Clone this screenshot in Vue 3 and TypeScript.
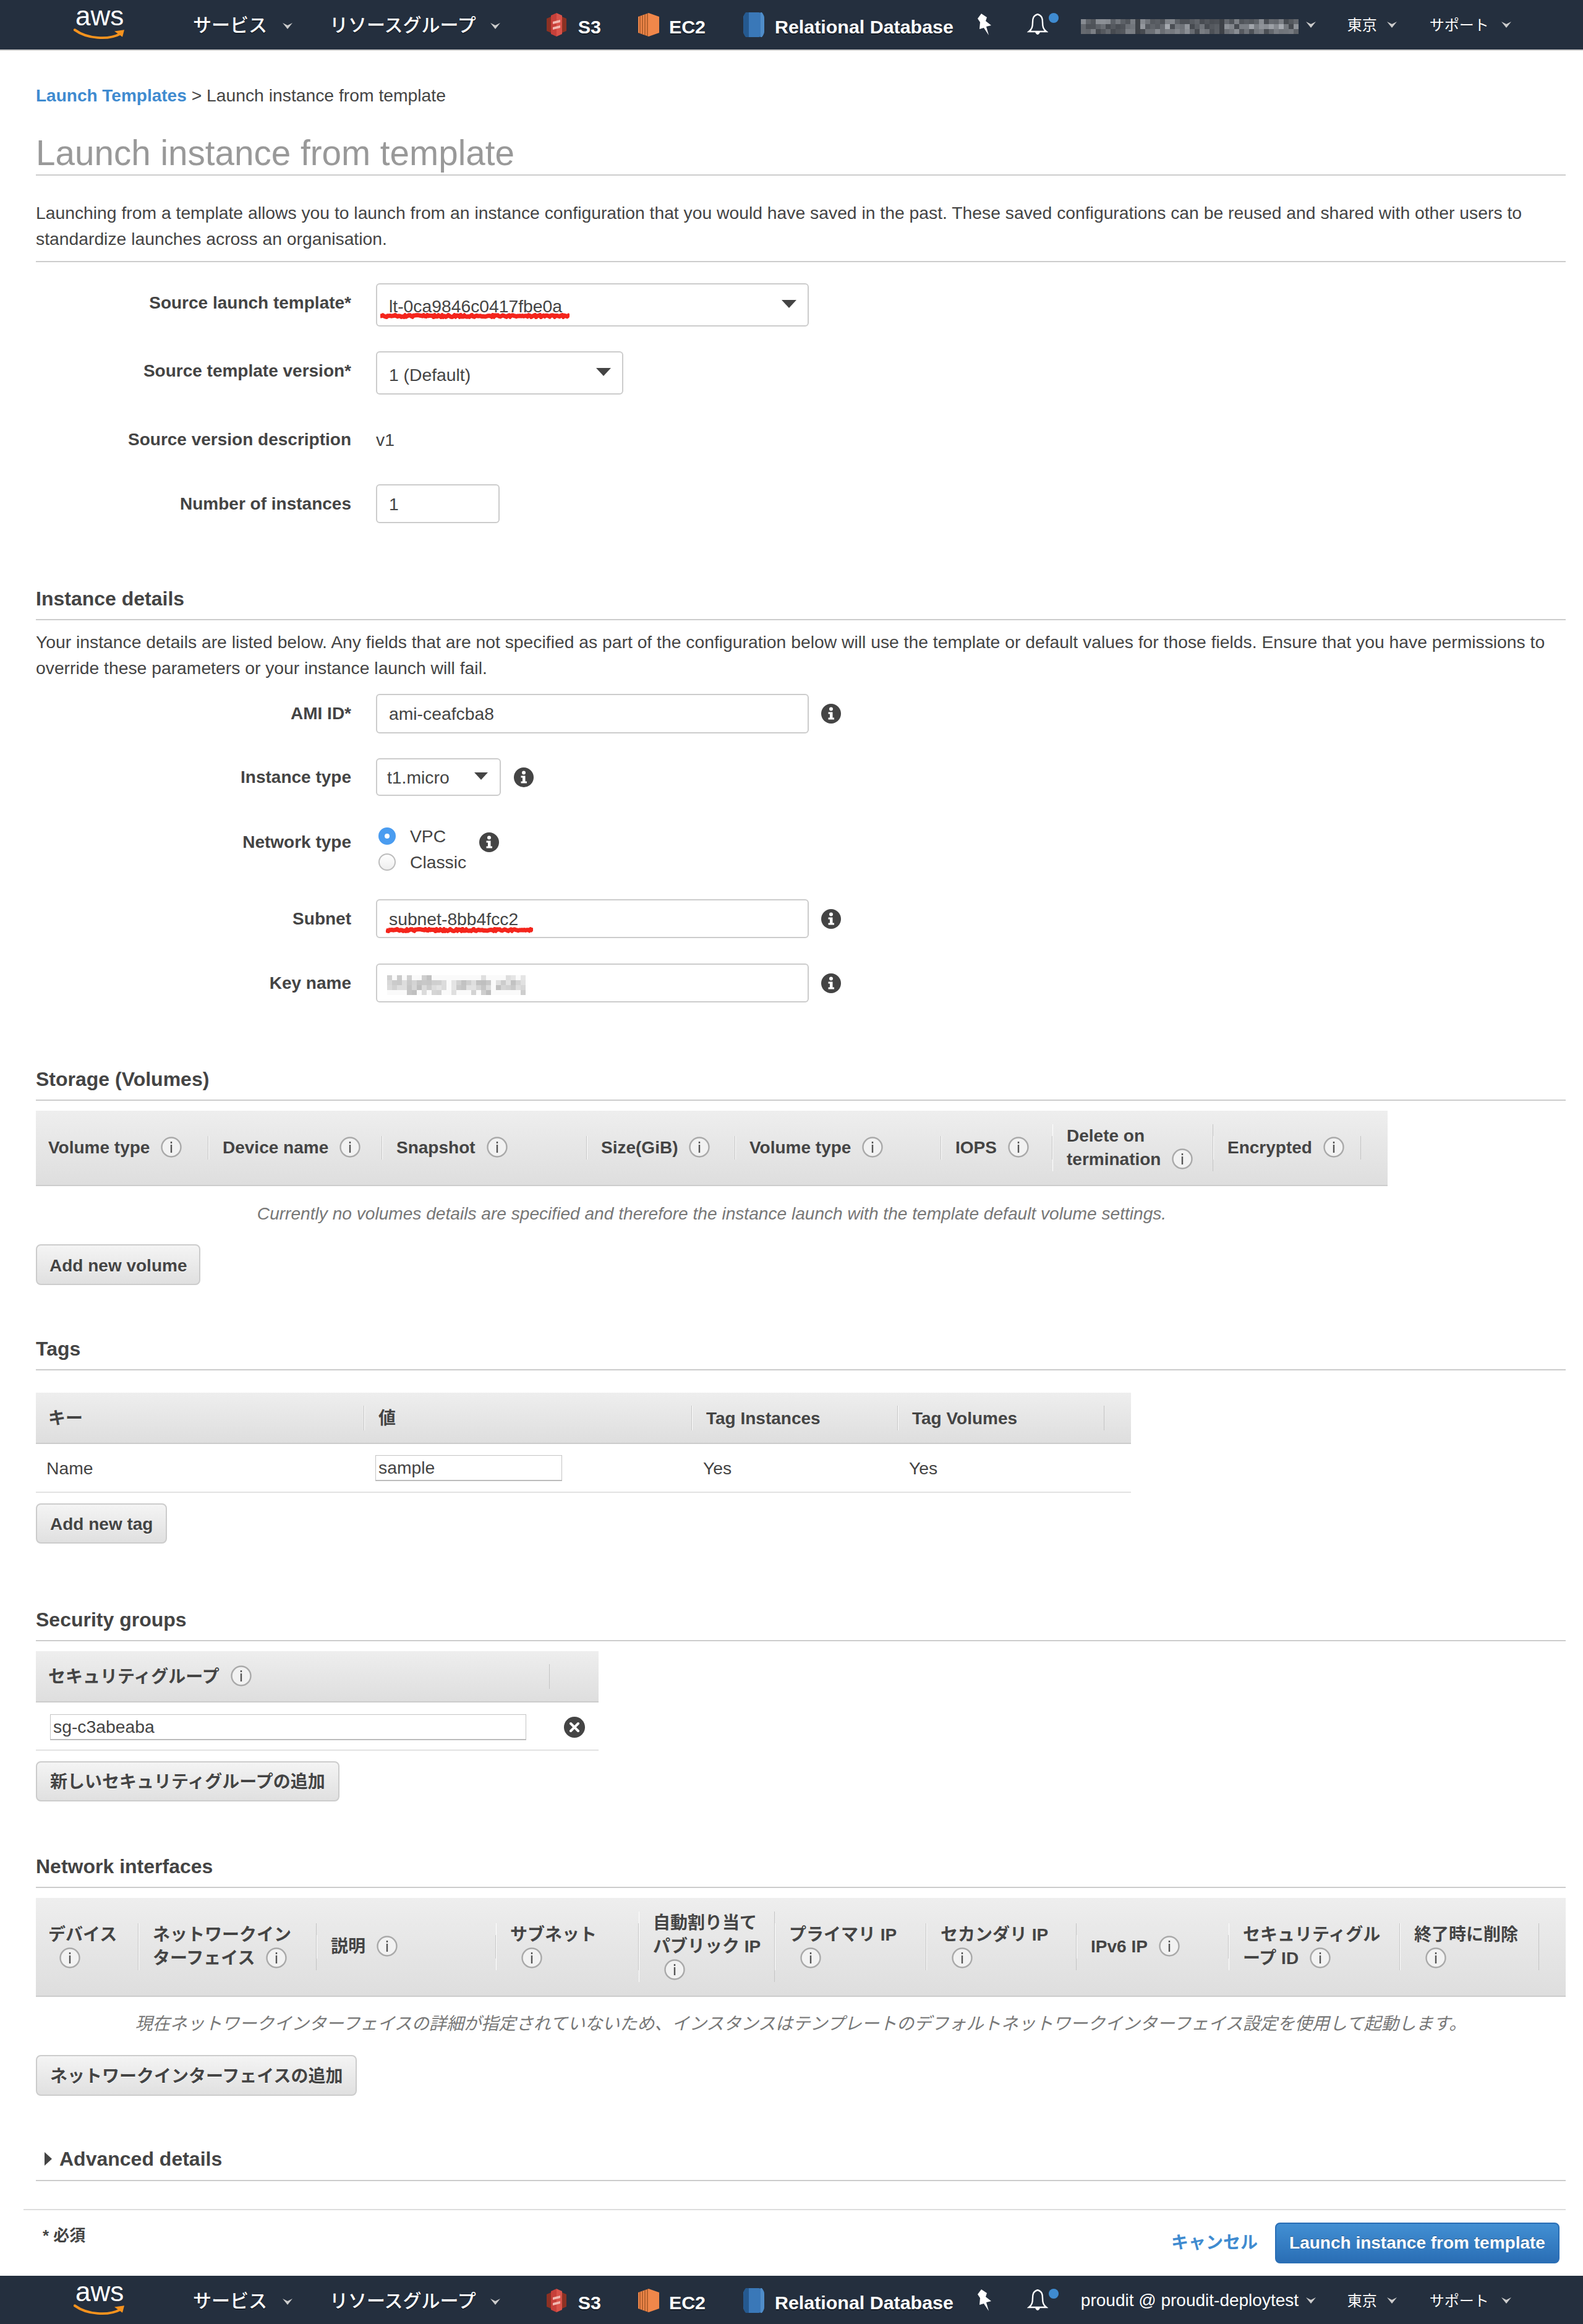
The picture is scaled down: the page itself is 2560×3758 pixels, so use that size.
<script setup lang="ts">
interface Col { w: number; lines: string[]; icon?: boolean }

const storageCols: Col[] = [
  { w: 279, lines: ['Volume type'], icon: true },
  { w: 281, lines: ['Device name'], icon: true },
  { w: 331, lines: ['Snapshot'], icon: true },
  { w: 240, lines: ['Size(GiB)'], icon: true },
  { w: 333, lines: ['Volume type'], icon: true },
  { w: 180, lines: ['IOPS'], icon: true },
  { w: 260, lines: ['Delete on', 'termination'], icon: true },
  { w: 239, lines: ['Encrypted'], icon: true },
]
const tagCols: Col[] = [
  { w: 531, lines: ['キー'] },
  { w: 530, lines: ['値'] },
  { w: 333, lines: ['Tag Instances'] },
  { w: 334, lines: ['Tag Volumes'] },
]
const sgCols: Col[] = [{ w: 831, lines: ['セキュリティグループ'], icon: true }]
const netCols: Col[] = [
  { w: 166, lines: ['デバイス', ''], icon: true },
  { w: 288, lines: ['ネットワークイン', 'ターフェイス'], icon: true },
  { w: 290, lines: ['説明'], icon: true },
  { w: 231, lines: ['サブネット', ''], icon: true },
  { w: 220, lines: ['自動割り当て', 'パブリック IP', ''], icon: true },
  { w: 245, lines: ['プライマリ IP', ''], icon: true },
  { w: 243, lines: ['セカンダリ IP', ''], icon: true },
  { w: 246, lines: ['IPv6 IP'], icon: true },
  { w: 277, lines: ['セキュリティグル', 'ープ ID'], icon: true },
  { w: 225, lines: ['終了時に削除', ''], icon: true },
]

function noise(seed: number): number {
  const v = Math.sin(seed * 12.9898) * 43758.5453
  return v - Math.floor(v)
}

const accountCells: { x: number; y: number; c: string }[] = []
for (let x = 0; x < 44; x++) {
  for (let y = 0; y < 3; y++) {
    const gap = x === 11 || x === 28
    const g = gap ? 62 : Math.round(70 + noise(x * 3 + y * 57 + 1) * (y === 1 ? 100 : 70))
    accountCells.push({ x: x * 8, y: y * 8, c: `rgb(${g},${g + 4},${g + 10})` })
  }
}

const keyCells: { x: number; y: number; c: string }[] = []
for (let x = 0; x < 28; x++) {
  for (let y = 0; y < 4; y++) {
    const edge = y === 0 || y === 3
    const blank = (x === 12 || x === 21) || (edge && noise(x + y * 31) > 0.4)
    const g = blank ? 250 : Math.round(190 + noise(x * 7 + y * 13 + 5) * 40)
    keyCells.push({ x: x * 8, y: y * 8, c: `rgb(${g},${g},${g})` })
  }
}

function squiggle(width: number, seed: number): string {
  let d = 'M0 5'
  for (let x = 2; x <= width; x += 2) {
    d += ` L${x} ${(3.5 + noise(x + seed) * 3).toFixed(1)}`
  }
  return d
}
const squiggleA = squiggle(306, 3)
const squiggleB = squiggle(238, 9)
</script>

<template>
  <div class="page">
    <header class="nav nav-top">
      <div class="logo">
        <span class="logo-word">aws</span>
        <svg class="logo-smile" width="84" height="20" viewBox="0 0 84 26" preserveAspectRatio="none">
          <path d="M2 3 C22 22 56 25 76 11" fill="none" stroke="#f7931e" stroke-width="5" stroke-linecap="round" />
          <path d="M66 6 L82 3 L79 18 Z" fill="#f7931e" />
        </svg>
      </div>
      <span class="nav-jp m-services">サービス</span>
      <svg class="chev c-a" width="16" height="10" viewBox="0 0 16 10"><path d="M0 0 L8 4 L16 0 L8 10 Z" fill="#ccc" /></svg>
      <span class="nav-jp m-groups">リソースグループ</span>
      <svg class="chev c-b" width="16" height="10" viewBox="0 0 16 10"><path d="M0 0 L8 4 L16 0 L8 10 Z" fill="#ccc" /></svg>
      <svg class="svc m-s3" width="32" height="38" viewBox="0 0 32 38">
        <path d="M0 9 L7 6 L7 32 L0 29 Z" fill="#8c3123" />
        <path d="M7 4 L16 0 L16 38 L7 34 Z" fill="#c7403a" />
        <path d="M16 0 L25 4 L25 34 L16 38 Z" fill="#d9534a" />
        <path d="M25 6 L32 9 L32 29 L25 32 Z" fill="#8c3123" />
        <path d="M10 14 L22 11 L22 15 L10 18 Z M10 23 L22 20 L22 24 L10 27 Z" fill="#f2b8b0" />
      </svg>
      <span class="svc-name g-s3">S3</span>
      <svg class="svc m-ec2" width="34" height="38" viewBox="0 0 34 38">
        <path d="M0 6 L17 0 L34 6 L34 32 L17 38 L0 32 Z" fill="#f0874a" />
        <path d="M3 5 V33 M7 4 V34 M11 2 V36 M15 1 V37" stroke="#a85a28" stroke-width="1.6" />
      </svg>
      <span class="svc-name g-ec2">EC2</span>
      <svg class="svc m-rds" width="34" height="40" viewBox="0 0 34 40">
        <rect width="34" height="40" rx="9" fill="#3a78b8" />
        <path d="M9 0 H4 Q0 4 0 12 V28 Q0 36 4 40 H9 Z" fill="#25598f" />
        <path d="M28 0 H30 Q34 4 34 12 V28 Q34 36 30 40 H28 Z" fill="#4f8cc8" />
      </svg>
      <span class="svc-name g-rds">Relational Database</span>
      <svg class="m-pin" width="26" height="36" viewBox="0 0 26 36">
        <path d="M8 0 L17 6 L15 12 L24 19 L16 21 L20 35 L12 23 L5 25 L6 14 L2 8 Z" fill="#fff" />
      </svg>
      <span class="bell-wrap m-bell">
        <svg width="34" height="36" viewBox="0 0 34 36">
          <path d="M17 1 C10 3 9 8 9 14 C9 21 8 25 3 29 H31 C26 25 25 21 25 14 C25 8 24 3 17 1 Z" fill="none" stroke="#fff" stroke-width="2.4" />
          <path d="M13 30 Q17 38 21 30" fill="#fff" />
        </svg>
        <i class="bell-dot"></i>
      </span>
      <svg class="account m-account" width="352" height="24" viewBox="0 0 352 24">
        <rect v-for="(c, i) in accountCells" :key="i" :x="c.x" :y="c.y" width="8" height="8" :fill="c.c" />
      </svg>
      <svg class="chev c-c" width="16" height="10" viewBox="0 0 16 10"><path d="M0 0 L8 4 L16 0 L8 10 Z" fill="#ccc" /></svg>
      <span class="nav-sm m-region">東京</span>
      <svg class="chev c-d" width="16" height="10" viewBox="0 0 16 10"><path d="M0 0 L8 4 L16 0 L8 10 Z" fill="#ccc" /></svg>
      <span class="nav-sm m-support">サポート</span>
      <svg class="chev c-e" width="16" height="10" viewBox="0 0 16 10"><path d="M0 0 L8 4 L16 0 L8 10 Z" fill="#ccc" /></svg>
    </header>

    <main class="main">
      <div class="crumb"><a class="link">Launch Templates</a> &gt; Launch instance from template</div>
      <h1 class="title">Launch instance from template</h1>
      <p class="para para-top">Launching from a template allows you to launch from an instance configuration that you would have saved in the past. These saved configurations can be reused and shared with other users to<br />standardize launches across an organisation.</p>

      <div class="row r1">
        <label class="lab">Source launch template*</label>
        <div class="ctl box sel w-lg">
          <span class="val">lt-0ca9846c0417fbe0a</span>
          <svg class="arrow" width="24" height="13" viewBox="0 0 24 13"><path d="M0 0 H24 L12 13 Z" fill="#444" /></svg>
          <svg class="squig sq-a" width="306" height="10" viewBox="0 0 306 10"><path :d="squiggleA" fill="none" stroke="#f4251c" stroke-width="7" /></svg>
        </div>
      </div>
      <div class="row r2">
        <label class="lab">Source template version*</label>
        <div class="ctl box sel w-md">
          <span class="val">1 (Default)</span>
          <svg class="arrow" width="24" height="13" viewBox="0 0 24 13"><path d="M0 0 H24 L12 13 Z" fill="#444" /></svg>
        </div>
      </div>
      <div class="row r3">
        <label class="lab">Source version description</label>
        <div class="ctl plain">v1</div>
      </div>
      <div class="row r4">
        <label class="lab">Number of instances</label>
        <div class="ctl box w-sm"><span class="val">1</span></div>
      </div>

      <h3 class="head h-inst">Instance details</h3>
      <p class="para para-inst">Your instance details are listed below. Any fields that are not specified as part of the configuration below will use the template or default values for those fields. Ensure that you have permissions to<br />override these parameters or your instance launch will fail.</p>

      <div class="row r5">
        <label class="lab">AMI ID*</label>
        <div class="ctl">
          <div class="box w-lg"><span class="val">ami-ceafcba8</span></div>
          <svg class="solid-info" width="32" height="32" viewBox="0 0 32 32"><circle cx="16" cy="16" r="16" fill="#444" /><circle cx="16" cy="8.5" r="3" fill="#fff" /><path d="M11.5 13.5 H18.5 V22.5 H21 V25.5 H11.5 V22.5 H14 V16.5 H11.5 Z" fill="#fff" /></svg>
        </div>
      </div>
      <div class="row r6">
        <label class="lab">Instance type</label>
        <div class="ctl">
          <div class="box sel w-type"><span class="val val-type">t1.micro</span>
            <svg class="arrow arrow-type" width="22" height="12" viewBox="0 0 24 13"><path d="M0 0 H24 L12 13 Z" fill="#444" /></svg>
          </div>
          <svg class="solid-info" width="32" height="32" viewBox="0 0 32 32"><circle cx="16" cy="16" r="16" fill="#444" /><circle cx="16" cy="8.5" r="3" fill="#fff" /><path d="M11.5 13.5 H18.5 V22.5 H21 V25.5 H11.5 V22.5 H14 V16.5 H11.5 Z" fill="#fff" /></svg>
        </div>
      </div>
      <div class="row r7">
        <label class="lab">Network type</label>
        <div class="ctl">
          <div class="radios">
            <div class="radio-line"><i class="radio on"></i>VPC</div>
            <div class="radio-line"><i class="radio"></i>Classic</div>
          </div>
          <svg class="solid-info info-net" width="32" height="32" viewBox="0 0 32 32"><circle cx="16" cy="16" r="16" fill="#444" /><circle cx="16" cy="8.5" r="3" fill="#fff" /><path d="M11.5 13.5 H18.5 V22.5 H21 V25.5 H11.5 V22.5 H14 V16.5 H11.5 Z" fill="#fff" /></svg>
        </div>
      </div>
      <div class="row r8">
        <label class="lab">Subnet</label>
        <div class="ctl">
          <div class="box w-lg"><span class="val">subnet-8bb4fcc2</span>
            <svg class="squig sq-b" width="238" height="10" viewBox="0 0 238 10"><path :d="squiggleB" fill="none" stroke="#f4251c" stroke-width="7" /></svg>
          </div>
          <svg class="solid-info" width="32" height="32" viewBox="0 0 32 32"><circle cx="16" cy="16" r="16" fill="#444" /><circle cx="16" cy="8.5" r="3" fill="#fff" /><path d="M11.5 13.5 H18.5 V22.5 H21 V25.5 H11.5 V22.5 H14 V16.5 H11.5 Z" fill="#fff" /></svg>
        </div>
      </div>
      <div class="row r9">
        <label class="lab">Key name</label>
        <div class="ctl">
          <div class="box w-lg">
            <svg class="key-blur" width="224" height="32" viewBox="0 0 224 32"><rect v-for="(c, i) in keyCells" :key="i" :x="c.x" :y="c.y" width="8" height="8" :fill="c.c" /></svg>
          </div>
          <svg class="solid-info" width="32" height="32" viewBox="0 0 32 32"><circle cx="16" cy="16" r="16" fill="#444" /><circle cx="16" cy="8.5" r="3" fill="#fff" /><path d="M11.5 13.5 H18.5 V22.5 H21 V25.5 H11.5 V22.5 H14 V16.5 H11.5 Z" fill="#fff" /></svg>
        </div>
      </div>

      <h3 class="head h-storage">Storage (Volumes)</h3>
      <div class="thead t-storage">
        <div v-for="(c, i) in storageCols" :key="i" class="th" :style="{ width: c.w + 'px' }">
          <div class="th-in">
            <template v-for="(l, j) in c.lines" :key="j">
              <span>{{ l }}</span><br v-if="j < c.lines.length - 1" />
            </template>
            <svg v-if="c.icon" class="q" width="34" height="34" viewBox="0 0 34 34"><circle cx="17" cy="17" r="15.5" fill="#f2f2f2" stroke="#a9a9a9" stroke-width="2.4" /><rect x="15.8" y="8" width="2.4" height="3" fill="#555" /><rect x="15.8" y="13" width="2.4" height="13" fill="#555" /></svg>
          </div>
        </div>
      </div>
      <div class="empty e-storage">Currently no volumes details are specified and therefore the instance launch with the template default volume settings.</div>
      <button class="btn b-vol">Add new volume</button>

      <h3 class="head h-tags">Tags</h3>
      <div class="thead t-tags">
        <div v-for="(c, i) in tagCols" :key="i" class="th" :style="{ width: c.w + 'px' }">
          <div class="th-in">{{ c.lines[0] }}</div>
        </div>
      </div>
      <div class="trow tr-tags">
        <div class="td" :style="{ width: tagCols[0].w + 'px' }">Name</div>
        <div class="td" :style="{ width: tagCols[1].w + 'px' }"><div class="cell-input ci-tag">sample</div></div>
        <div class="td" :style="{ width: tagCols[2].w + 'px' }">Yes</div>
        <div class="td" :style="{ width: tagCols[3].w + 'px' }">Yes</div>
      </div>
      <button class="btn b-tag">Add new tag</button>

      <h3 class="head h-sg">Security groups</h3>
      <div class="thead t-sg">
        <div v-for="(c, i) in sgCols" :key="i" class="th" :style="{ width: c.w + 'px' }">
          <div class="th-in">{{ c.lines[0] }}<svg class="q" width="34" height="34" viewBox="0 0 34 34"><circle cx="17" cy="17" r="15.5" fill="#f2f2f2" stroke="#a9a9a9" stroke-width="2.4" /><rect x="15.8" y="8" width="2.4" height="3" fill="#555" /><rect x="15.8" y="13" width="2.4" height="13" fill="#555" /></svg></div>
        </div>
      </div>
      <div class="trow tr-sg">
        <div class="cell-input ci-sg">sg-c3abeaba</div>
        <svg class="close" width="34" height="34" viewBox="0 0 34 34"><circle cx="17" cy="17" r="17" fill="#444" /><path d="M11 11 L23 23 M23 11 L11 23" stroke="#fff" stroke-width="4" stroke-linecap="round" /></svg>
      </div>
      <button class="btn b-sg">新しいセキュリティグループの追加</button>

      <h3 class="head h-net">Network interfaces</h3>
      <div class="thead t-net">
        <div v-for="(c, i) in netCols" :key="i" class="th" :style="{ width: c.w + 'px' }">
          <div class="th-in">
            <template v-for="(l, j) in c.lines" :key="j">
              <span>{{ l }}</span><br v-if="j < c.lines.length - 1" />
            </template>
            <svg v-if="c.icon" class="q" width="34" height="34" viewBox="0 0 34 34"><circle cx="17" cy="17" r="15.5" fill="#f2f2f2" stroke="#a9a9a9" stroke-width="2.4" /><rect x="15.8" y="8" width="2.4" height="3" fill="#555" /><rect x="15.8" y="13" width="2.4" height="13" fill="#555" /></svg>
          </div>
        </div>
      </div>
      <div class="empty e-net">現在ネットワークインターフェイスの詳細が指定されていないため、インスタンスはテンプレートのデフォルトネットワークインターフェイス設定を使用して起動します。</div>
      <button class="btn b-net">ネットワークインターフェイスの追加</button>

      <h3 class="head h-adv"><svg class="tri" width="12" height="22" viewBox="0 0 12 22"><path d="M0 0 L12 11 L0 22 Z" fill="#444" /></svg>Advanced details</h3>
    </main>

    <footer class="actions">
      <span class="req">* 必須</span>
      <a class="link cancel">キャンセル</a>
      <button class="primary">Launch instance from template</button>
    </footer>

    <header class="nav nav-bottom">
      <div class="logo">
        <span class="logo-word">aws</span>
        <svg class="logo-smile" width="84" height="20" viewBox="0 0 84 26" preserveAspectRatio="none">
          <path d="M2 3 C22 22 56 25 76 11" fill="none" stroke="#f7931e" stroke-width="5" stroke-linecap="round" />
          <path d="M66 6 L82 3 L79 18 Z" fill="#f7931e" />
        </svg>
      </div>
      <span class="nav-jp m-services">サービス</span>
      <svg class="chev c-a" width="16" height="10" viewBox="0 0 16 10"><path d="M0 0 L8 4 L16 0 L8 10 Z" fill="#ccc" /></svg>
      <span class="nav-jp m-groups">リソースグループ</span>
      <svg class="chev c-b" width="16" height="10" viewBox="0 0 16 10"><path d="M0 0 L8 4 L16 0 L8 10 Z" fill="#ccc" /></svg>
      <svg class="svc m-s3" width="32" height="38" viewBox="0 0 32 38">
        <path d="M0 9 L7 6 L7 32 L0 29 Z" fill="#8c3123" />
        <path d="M7 4 L16 0 L16 38 L7 34 Z" fill="#c7403a" />
        <path d="M16 0 L25 4 L25 34 L16 38 Z" fill="#d9534a" />
        <path d="M25 6 L32 9 L32 29 L25 32 Z" fill="#8c3123" />
        <path d="M10 14 L22 11 L22 15 L10 18 Z M10 23 L22 20 L22 24 L10 27 Z" fill="#f2b8b0" />
      </svg>
      <span class="svc-name g-s3">S3</span>
      <svg class="svc m-ec2" width="34" height="38" viewBox="0 0 34 38">
        <path d="M0 6 L17 0 L34 6 L34 32 L17 38 L0 32 Z" fill="#f0874a" />
        <path d="M3 5 V33 M7 4 V34 M11 2 V36 M15 1 V37" stroke="#a85a28" stroke-width="1.6" />
      </svg>
      <span class="svc-name g-ec2">EC2</span>
      <svg class="svc m-rds" width="34" height="40" viewBox="0 0 34 40">
        <rect width="34" height="40" rx="9" fill="#3a78b8" />
        <path d="M9 0 H4 Q0 4 0 12 V28 Q0 36 4 40 H9 Z" fill="#25598f" />
        <path d="M28 0 H30 Q34 4 34 12 V28 Q34 36 30 40 H28 Z" fill="#4f8cc8" />
      </svg>
      <span class="svc-name g-rds">Relational Database</span>
      <svg class="m-pin" width="26" height="36" viewBox="0 0 26 36">
        <path d="M8 0 L17 6 L15 12 L24 19 L16 21 L20 35 L12 23 L5 25 L6 14 L2 8 Z" fill="#fff" />
      </svg>
      <span class="bell-wrap m-bell">
        <svg width="34" height="36" viewBox="0 0 34 36">
          <path d="M17 1 C10 3 9 8 9 14 C9 21 8 25 3 29 H31 C26 25 25 21 25 14 C25 8 24 3 17 1 Z" fill="none" stroke="#fff" stroke-width="2.4" />
          <path d="M13 30 Q17 38 21 30" fill="#fff" />
        </svg>
        <i class="bell-dot"></i>
      </span>
      <span class="account-text m-account">proudit @ proudit-deploytest</span>
      <svg class="chev c-c" width="16" height="10" viewBox="0 0 16 10"><path d="M0 0 L8 4 L16 0 L8 10 Z" fill="#ccc" /></svg>
      <span class="nav-sm m-region">東京</span>
      <svg class="chev c-d" width="16" height="10" viewBox="0 0 16 10"><path d="M0 0 L8 4 L16 0 L8 10 Z" fill="#ccc" /></svg>
      <span class="nav-sm m-support">サポート</span>
      <svg class="chev c-e" width="16" height="10" viewBox="0 0 16 10"><path d="M0 0 L8 4 L16 0 L8 10 Z" fill="#ccc" /></svg>
    </header>
  </div>
</template>

<style scoped>
.page {
  width: 2560px;
  height: 3758px;
  overflow: hidden;
  background: #fff;
  color: #444;
  font-family: "Liberation Sans", "Noto Sans CJK JP", sans-serif;
  font-size: 28.3px;
  line-height: 42px;
  display: flex;
  flex-direction: column;
}

/* nav */
.nav {
  flex: none;
  display: flex;
  align-items: center;
  background: #242f3e;
  color: #fff;
  padding-left: 120px;
  box-sizing: border-box;
}
.nav-top { height: 82px; border-bottom: 2px solid #ccc; }
.nav-bottom { height: 80px; }
.logo { position: relative; width: 84px; height: 50px; flex: none; margin-top: -2px; }
.logo-word {
  position: absolute;
  left: 2px;
  top: -13px;
  font-family: "Liberation Sans", sans-serif;
  font-size: 44px;
  line-height: 50px;
  color: #fff;
}
.logo-smile { position: absolute; left: -1px; top: 32px; }
.nav-jp { font-size: 30px; font-weight: 500; line-height: 40px; margin-top: 2px; text-shadow: 0 2px 0 rgba(0,0,0,.35); flex: none; }
.nav-sm { font-size: 24px; line-height: 40px; margin-top: 2px; flex: none; text-shadow: 0 1px 0 rgba(0,0,0,.35); }
.account-text { font-size: 28px; line-height: 40px; width: 352px; flex: none; white-space: nowrap; }
.svc-name { font-size: 30.4px; font-weight: 700; line-height: 40px; margin-top: 6px; text-shadow: 0 2px 0 rgba(0,0,0,.4); flex: none; }
.chev, .svc, .m-pin, .account { flex: none; display: block; }
.m-services { margin-left: 108px; }
.c-a { margin-left: 25px; margin-top: 4px; }
.m-groups { margin-left: 60px; }
.c-b { margin-left: 23px; margin-top: 4px; }
.m-s3 { margin-left: 75px; }
.g-s3 { margin-left: 19px; }
.m-ec2 { margin-left: 60px; }
.g-ec2 { margin-left: 16px; }
.m-rds { margin-left: 61px; }
.g-rds { margin-left: 17px; }
.m-pin { margin-left: 37px; }
.m-bell { margin-left: 56px; }
.bell-wrap { position: relative; flex: none; width: 34px; height: 36px; }
.bell-wrap svg { display: block; }
.bell-dot { position: absolute; left: 35px; top: -1px; width: 16px; height: 16px; border-radius: 50%; background: #3f8bd0; }
.m-account { margin-left: 53px; }
.account { width: 352px; margin-top: 6px; }
.c-c { margin-left: 12px; }
.m-region { margin-left: 51px; }
.c-d { margin-left: 16px; }
.m-support { margin-left: 53px; }
.c-e { margin-left: 20px; }

/* main */
.main {
  flex: none;
  padding: 0 28px 0 58px;
  height: 3490px;
  box-sizing: border-box;
  display: flex;
  flex-direction: column;
  align-items: flex-start;
}
.link { color: #3f8bd0; font-weight: 700; font-size: 28px; }
.crumb { margin-top: 51px; height: 42px; }
.title {
  margin: 33px 0 0;
  align-self: stretch;
  height: 74px;
  font-size: 56.6px;
  line-height: 80px;
  font-weight: 400;
  color: #999;
  border-bottom: 2px solid #ccc;
}
.para { margin: 0; align-self: stretch; }
.para-top { margin-top: 39px; padding-bottom: 15px; border-bottom: 2px solid #ccc; }
.para-inst { margin-top: 14px; }

.row { display: grid; grid-template-columns: 510px 1fr; column-gap: 40px; align-items: center; align-self: stretch; }
.lab { font-weight: 700; font-size: 28px; text-align: right; }
.ctl { display: flex; align-items: center; min-width: 0; }
.plain { height: 42px; }
.box {
  position: relative;
  display: flex;
  align-items: center;
  box-sizing: border-box;
  background: #fff;
  border: 2px solid #ccc;
  border-radius: 6px;
  padding-left: 19px;
}
.sel { justify-content: space-between; }
.w-lg { width: 700px; height: 100%; }
.w-md { width: 400px; }
.w-sm { width: 200px; }
.w-type { width: 202px; padding-left: 16px; }
.val { line-height: 42px; }
.arrow { margin-right: 18px; margin-top: -4px; }
.arrow-type { margin-right: 19px; }
.squig { position: absolute; left: 5px; }
.sq-a { top: 46px; }
.sq-b { left: 14px; top: 43px; }
.key-blur { margin-top: 6px; margin-left: -3px; }

.r1 { margin-top: 34px; height: 70px; }
.r1 .box { height: 70px; }
.r1 .lab { margin-top: -6px; }
.r1 .val { margin-top: 3px; }
.r2 { margin-top: 40px; height: 70px; }
.r2 .box { height: 70px; }
.r2 .lab { margin-top: -6px; }
.r2 .val { margin-top: 5px; }
.r3 { margin-top: 52px; height: 42px; }
.r4 { margin-top: 51px; height: 63px; }
.r4 .box { height: 63px; }
.r5 { margin-top: 21px; height: 64px; }
.r5 .box { height: 64px; }
.r6 { margin-top: 40px; height: 61px; }
.r6 .box { height: 61px; }
.r7 { margin-top: 44px; height: 84px; }
.r7 .lab { margin-top: -22px; }
.r8 { margin-top: 39px; height: 63px; }
.r8 .box { height: 63px; }
.r9 { margin-top: 41px; height: 63px; }
.r9 .box { height: 63px; }
.solid-info { flex: none; margin-left: 20px; }
.r6 .solid-info { margin-left: 21px; }
.info-net { margin-left: 5px; margin-top: -22px; }
.radios { width: 162px; }
.radio-line { display: flex; align-items: center; height: 42px; padding-left: 4px; }
.radio {
  display: block;
  box-sizing: border-box;
  width: 28px;
  height: 28px;
  margin-right: 23px;
  border-radius: 50%;
  background: linear-gradient(#fff, #eee);
  border: 2px solid #bdbdbd;
}
.radio.on { background: #fff; border: 10px solid #4a9cf0; }

.head {
  margin: 0;
  align-self: stretch;
  box-sizing: border-box;
  height: 58px;
  font-size: 32px;
  line-height: 46px;
  font-weight: 700;
  border-bottom: 2px solid #ccc;
}
.h-inst { margin-top: 99px; }
.h-storage { margin-top: 101px; }
.h-tags { margin-top: 80px; }
.h-sg { margin-top: 100px; }
.h-net { margin-top: 82px; }
.h-adv { margin-top: 80px; display: flex; align-items: center; height: 58px; padding-bottom: 12px; }
.tri { margin: 0 12px 0 14px; }

.thead {
  display: flex;
  align-items: center;
  box-sizing: border-box;
  background: linear-gradient(#eee, #dedede);
  border-bottom: 2px solid #ccc;
  font-size: 28px;
  font-weight: 700;
  line-height: 38px;
}
.th { flex: none; box-sizing: border-box; }
.th-in {
  box-sizing: border-box;
  padding-left: 22px;
  border-left: 1px solid #fff;
  border-right: 1px solid #c4c4c4;
  white-space: nowrap;
}
.th:first-child .th-in { border-left: none; padding-left: 20px; }
.q { vertical-align: middle; margin-left: 18px; margin-top: -6px; }
.t-storage { margin-top: 16px; width: 2186px; height: 122px; }
.t-tags { margin-top: 36px; width: 1771px; height: 83px; }
.t-sg { margin-top: 16px; width: 910px; height: 83px; }
.t-net { margin-top: 16px; width: 2474px; height: 160px; }
.t-tags .th-in, .t-sg .th-in { padding-top: 2px; }

.empty { font-style: italic; font-size: 28.12px; color: #777; text-align: center; height: 42px; }
.e-storage { margin-top: 24px; width: 2186px; }
.e-net { margin-top: 23px; width: 2474px; }

.btn {
  display: block;
  box-sizing: border-box;
  height: 66px;
  padding: 3px 21px 0;
  font: 700 28px/42px "Liberation Sans", "Noto Sans CJK JP", sans-serif;
  color: #444;
  background: linear-gradient(#f4f4f4, #e0e0e0);
  border: 2px solid #ccc;
  border-radius: 8px;
  text-shadow: 0 1px 0 #fff;
}
.b-vol { margin-top: 28px; padding-left: 20px; padding-right: 20px; }
.b-tag { margin-top: 17px; height: 65px; }
.b-sg { margin-top: 17px; height: 65px; }
.b-net { margin-top: 29px; }

.trow { display: flex; align-items: center; box-sizing: border-box; border-bottom: 2px solid #e2e2e2; }
.tr-tags { width: 1771px; height: 79px; }
.td { flex: none; box-sizing: border-box; padding-left: 18px; }
.td:first-child { padding-left: 17px; }
.cell-input {
  box-sizing: border-box;
  background: #fff;
  border: 1px solid #c4c4c4;
  border-bottom: 2px solid #bbb;
  padding-left: 4px;
  height: 42px;
  line-height: 38px;
}
.ci-tag { width: 302px; }
.tr-sg { width: 910px; height: 78px; padding: 3px 0 0 23px; }
.ci-sg { width: 770px; }
.close { margin-left: 61px; }

.actions {
  flex: none;
  height: 108px;
  box-sizing: border-box;
  display: flex;
  align-items: center;
  margin: 0 28px 0 38px;
  padding: 0 10px 0 31px;
  border-top: 2px solid #ddd;
}
.req { font-weight: 700; font-size: 26px; margin-top: -24px; }
.cancel { margin-left: auto; margin-right: 28px; }
.primary {
  height: 66px;
  width: 460px;
  padding: 0;
  box-sizing: border-box;
  font: 700 28px/42px "Liberation Sans", sans-serif;
  color: #fff;
  background: linear-gradient(#428fd3, #2a6eb5);
  border: 2px solid #2a6eb5;
  border-radius: 8px;
  text-shadow: 0 -1px 0 rgba(0,0,0,.35);
}
</style>

<style>
html, body { margin: 0; padding: 0; background: #fff; }
</style>
